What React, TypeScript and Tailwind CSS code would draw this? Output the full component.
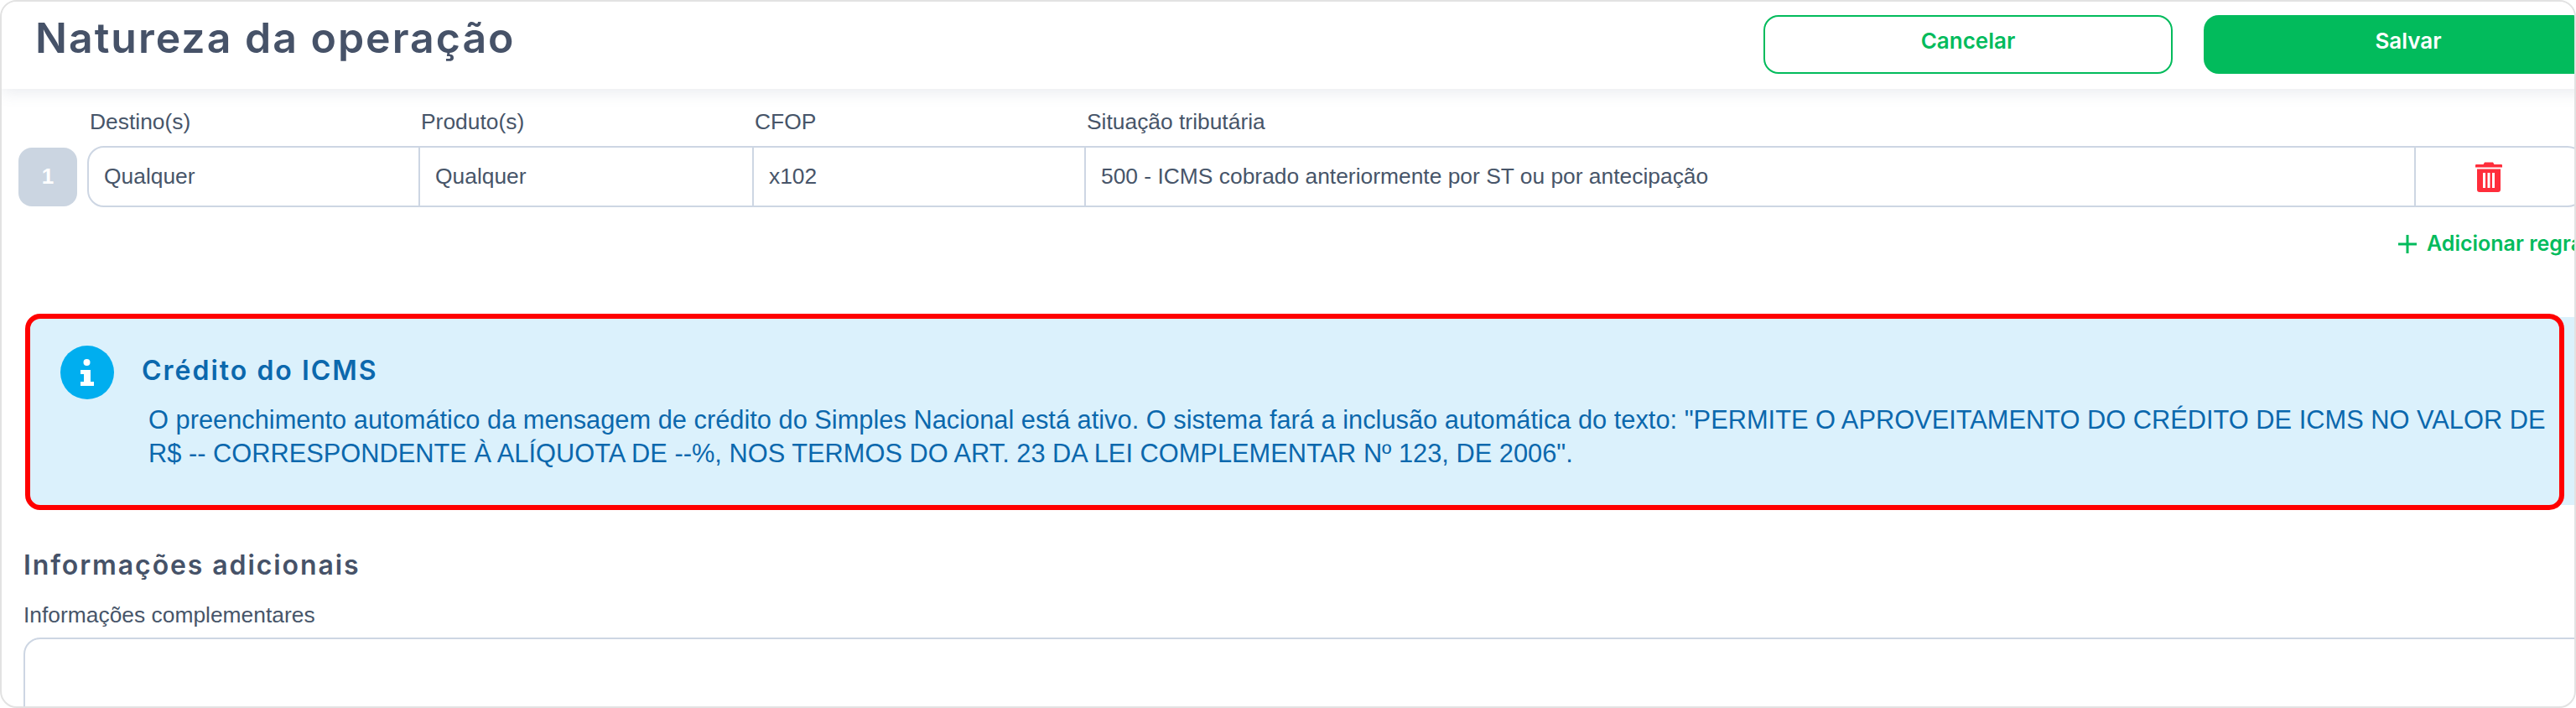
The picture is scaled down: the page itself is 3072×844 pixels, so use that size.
const headingFont = "font-['Inter','Noto_Sans',sans-serif]";

const columns = [
  { label: "Destino(s)", value: "Qualquer", width: "w-[395px]" },
  { label: "Produto(s)", value: "Qualquer", width: "w-[398px]" },
  { label: "CFOP", value: "x102", width: "w-[396px]" },
  {
    label: "Situação tributária",
    value: "500 - ICMS cobrado anteriormente por ST ou por antecipação",
    width: "w-[1586px]",
  },
];

function TrashIcon() {
  return (
    <svg width="32" height="36" viewBox="0 0 32 36" fill="#ff2d3b">
      <path d="M11 0.5h10l1.5 2.5H31a1 1 0 0 1 1 1V6.5H0V4a1 1 0 0 1 1-1h8.5z" />
      <path
        fillRule="evenodd"
        d="M2 8.5h28V33a3 3 0 0 1-3 3H5a3 3 0 0 1-3-3zM9 13v18h3V13zM14.5 13v18h3V13zM20 13v18h3V13z"
      />
    </svg>
  );
}

function InfoIcon() {
  return (
    <svg width="64" height="64" viewBox="0 0 64 64" className="shrink-0">
      <circle cx="32" cy="32" r="32" fill="#00aeef" />
      <circle cx="31.5" cy="20" r="4" fill="#fff" />
      <path d="M24 29h12v14h4v5H24v-5h4v-9h-4z" fill="#fff" />
    </svg>
  );
}

export default function App() {
  return (
    <div className="h-[844px] w-[3072px] overflow-hidden rounded-[20px] border-2 border-[#e2e2e2] bg-white font-['Liberation_Sans',Arial,sans-serif] text-[#475569]">
      <div className="w-[3130px]">
        {/* Header */}
        <header className="flex h-[104px] items-start justify-between bg-white pl-[40px] pr-[16px] shadow-[0_4px_18px_rgba(100,116,139,0.14)]">
          <h1 className={`${headingFont} mt-[13px] text-[50px] leading-[60px] font-semibold tracking-[2px] text-[#465268]`}>
            Natureza da operação
          </h1>
          <div className="mt-[16px] flex gap-[37px]">
            <button className={`${headingFont} h-[70px] w-[488px] rounded-[18px] border-2 border-[#02bb5c] pb-[10px] text-[26px] font-semibold text-[#02bb5c]`}>
              Cancelar
            </button>
            <button className={`${headingFont} h-[70px] w-[488px] rounded-[18px] bg-[#02bb5c] pb-[10px] text-[26px] font-semibold text-white`}>
              Salvar
            </button>
          </div>
        </header>

        {/* Rules */}
        <section className="pt-[24px]">
          <div className="flex pl-[105px] text-[26.4px] leading-[30px]">
            {columns.map((col) => (
              <span key={col.label} className={col.width}>
                {col.label}
              </span>
            ))}
          </div>
          <div className="mt-[14px] flex items-center gap-[12px] pl-[20px]">
            <div className="flex h-[70px] w-[70px] items-center justify-center rounded-[16px] bg-[#cbd5e1] text-[26px] font-semibold text-white">
              1
            </div>
            <div className="flex h-[73px] w-[2978px] items-center rounded-[20px] border-2 border-[#cdd6e3] text-[26.4px]">
              {columns.map((col) => (
                <div
                  key={col.label}
                  className={`${col.width} flex h-full items-center border-r-2 border-[#cdd6e3] pl-[18px]`}
                >
                  {col.value}
                </div>
              ))}
              <div className="flex h-full w-[174px] items-center justify-center">
                <TrashIcon />
              </div>
            </div>
          </div>
          <div className={`${headingFont} mt-[31px] flex h-[26px] items-center gap-[12px] pl-[2858px] text-[25px] font-semibold text-[#02bb5c]`}>
            <svg width="22" height="22" viewBox="0 0 22 22" stroke="#02bb5c" strokeWidth="3" className="shrink-0">
              <path d="M11 0v22M0 11h22" />
            </svg>
            <span className="whitespace-nowrap">Adicionar regra</span>
          </div>
        </section>

        {/* Alert */}
        <section className="relative mt-[74px] ml-[31px] h-[224px] rounded-[16px] bg-[#dbf1fc] pt-[34px] pl-[39px] text-[#0b68ad]">
          <div className="flex items-center gap-[33px]">
            <InfoIcon />
            <h2 className={`${headingFont} mb-[5px] text-[32px] leading-[40px] font-semibold tracking-[2px] text-[#0b68ad]`}>
              Crédito do ICMS
            </h2>
          </div>
          <p className="mt-[5px] ml-[105px] w-[2880px] text-[30.8px] leading-[40px]">
            O preenchimento automático da mensagem de crédito do Simples Nacional está ativo. O sistema fará a inclusão automática do texto: "PERMITE O APROVEITAMENTO DO CRÉDITO DE ICMS NO VALOR DE R$ -- CORRESPONDENTE À ALÍQUOTA DE --%, NOS TERMOS DO ART. 23 DA LEI COMPLEMENTAR Nº 123, DE 2006".
          </p>
          <div className="absolute top-[-4px] left-[-3px] h-[234px] w-[3028px] rounded-[18px] border-[6px] border-[#ff0000]" />
        </section>

        {/* Additional info */}
        <section className="pt-[52px] pl-[26px]">
          <h2 className={`${headingFont} text-[32px] leading-[40px] font-semibold tracking-[1.9px] text-[#465268]`}>
            Informações adicionais
          </h2>
          <p className="mt-[24px] text-[26.4px] leading-[30px]">Informações complementares</p>
          <div className="mt-[12px] h-[160px] w-[3060px] rounded-[20px] border-2 border-[#cdd6e3]" />
        </section>
      </div>
    </div>
  );
}
